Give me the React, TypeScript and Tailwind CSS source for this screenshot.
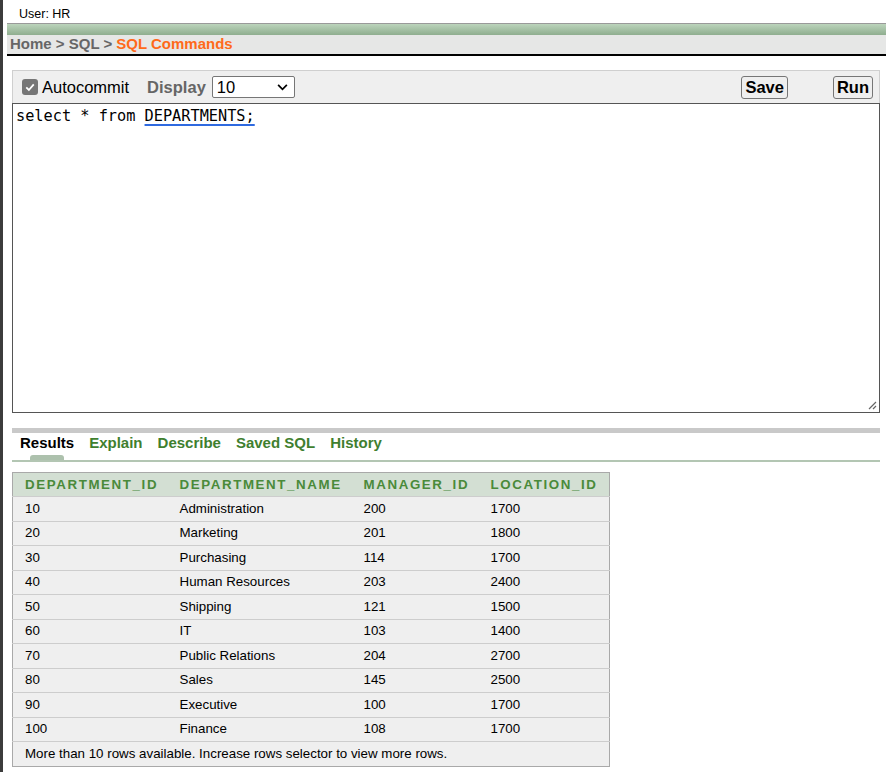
import React from 'react';

const rows: [string, string, string, string][] = [
    ['10', 'Administration', '200', '1700'],
    ['20', 'Marketing', '201', '1800'],
    ['30', 'Purchasing', '114', '1700'],
    ['40', 'Human Resources', '203', '2400'],
    ['50', 'Shipping', '121', '1500'],
    ['60', 'IT', '103', '1400'],
    ['70', 'Public Relations', '204', '2700'],
    ['80', 'Sales', '145', '2500'],
    ['90', 'Executive', '100', '1700'],
    ['100', 'Finance', '108', '1700'],
];

const cols = ['DEPARTMENT_ID', 'DEPARTMENT_NAME', 'MANAGER_ID', 'LOCATION_ID'];
const widths = ['w-[155px]', 'w-[184px]', 'w-[127px]', ''];

export default function App() {
    return (
        <div className="flex w-[886px] h-[772px] bg-white font-['Liberation_Sans',Arial,sans-serif] overflow-hidden">
            {/* left frame stripe */}
            <div className="w-[3px] h-full bg-[#3c3c3c]" />
            <div className="w-[4px] h-full bg-white" />

            <div className="flex-1 flex flex-col">
                {/* user line */}
                <div className="h-[23px] pl-[12px] pt-[7px] text-[12.5px] leading-[14px] text-black">User: HR</div>

                {/* green bar */}
                <div className="h-[12px] border-t border-[#9a9a9a] bg-gradient-to-b from-[#bcd4bc] to-[#8fae8f]" />

                {/* breadcrumb */}
                <div className="h-[21px] bg-[#e6e7e6] border-b-2 border-black pl-[3px] flex items-center text-[15px] font-bold">
                    <span className="text-[#666]">Home &gt; SQL &gt; </span>
                    <span className="text-[#ff6a1a] ml-[4px]">SQL Commands</span>
                </div>

                <div className="pl-[5px] pr-[6px] pt-[14px]">
                    {/* toolbar */}
                    <div className="h-[33px] bg-[#efefef] border-t border-x border-[#cfcfcf] flex items-center pl-[9px] pr-[6px]">
                        <span className="w-[16px] h-[16px] rounded-[3px] bg-[#767676] flex items-center justify-center">
                            <svg viewBox="0 0 16 16" width="12" height="12">
                                <path d="M3 8.5 L6.5 12 L13 4.5" fill="none" stroke="white" strokeWidth="2.4" />
                            </svg>
                        </span>
                        <span className="ml-[4px] text-[16.5px] text-black">Autocommit</span>
                        <span className="ml-[18px] text-[16.5px] font-bold text-[#666]">Display</span>
                        <div className="ml-[6px] w-[83px] h-[22px] border border-[#767676] rounded-[2px] bg-white flex items-center justify-between pl-[4px] pr-[6px] text-[16.5px] text-black">
                            <span>10</span>
                            <svg viewBox="0 0 12 8" width="11" height="7">
                                <path d="M1 1 L6 6 L11 1" fill="none" stroke="black" strokeWidth="2" />
                            </svg>
                        </div>
                        <div className="flex-1" />
                        <button className="h-[23px] px-[3px] border border-[#767676] rounded-[3px] bg-[#efefef] text-[16.5px] font-bold text-black leading-none">Save</button>
                        <button className="ml-[45px] h-[23px] px-[3px] border border-[#767676] rounded-[3px] bg-[#efefef] text-[16.5px] font-bold text-black leading-none">Run</button>
                    </div>

                    {/* editor */}
                    <div className="relative h-[310px] border border-[#555] bg-white px-[3px] pt-[3px] font-['DejaVu_Sans_Mono',monospace] text-[15.25px] leading-[18px] text-black">
                        select * from{' '}
                        <span className="underline decoration-[#2f6ae0] decoration-2 underline-offset-[3px]">DEPARTMENTS;</span>
                        <svg className="absolute right-[2px] bottom-[2px]" width="9" height="9" viewBox="0 0 9 9">
                            <path d="M8 1 L1 8 M8 5 L5 8" stroke="#666" strokeWidth="1.2" />
                        </svg>
                    </div>

                    {/* tabs */}
                    <div className="mt-[15px] h-[5px] bg-[#c9c9c9]" />
                    <div className="h-[22px] flex items-start pt-[1px] pl-[8px] gap-[15px] text-[15px] font-bold leading-[17px]">
                        <span className="text-black">Results</span>
                        <span className="text-[#3f7f2f]">Explain</span>
                        <span className="text-[#3f7f2f]">Describe</span>
                        <span className="text-[#3f7f2f]">Saved SQL</span>
                        <span className="text-[#3f7f2f]">History</span>
                    </div>
                    <div className="h-[5px]">
                        <div className="ml-[18px] w-[34px] h-[5px] bg-[#adc1ad] rounded-t-[3px]" />
                    </div>
                    <div className="h-[2px] bg-[#b3c6b3]" />

                    {/* results table */}
                    <table className="mt-[10px] w-[598px] border-collapse border border-[#a9a9a9] text-[13.33px] text-black">
                        <thead>
                            <tr className="h-[24px] bg-[#d3dfd3]">
                                {cols.map((c, i) => (
                                    <th
                                        key={c}
                                        className={`${widths[i]} text-left pl-[12px] font-bold tracking-[1.6px] text-[#4a8a3a]`}
                                    >
                                        {c}
                                    </th>
                                ))}
                            </tr>
                        </thead>
                        <tbody>
                            {rows.map((r) => (
                                <tr key={r[0]} className="h-[24.5px] bg-[#efefef] border-t border-[#cdcdcd]">
                                    {r.map((v, i) => (
                                        <td key={i} className="pl-[12px]">{v}</td>
                                    ))}
                                </tr>
                            ))}
                            <tr className="h-[25px] bg-[#efefef] border-t border-[#cdcdcd]">
                                <td colSpan={4} className="pl-[12px]">
                                    More than 10 rows available. Increase rows selector to view more rows.
                                </td>
                            </tr>
                        </tbody>
                    </table>
                </div>
            </div>
        </div>
    );
}
